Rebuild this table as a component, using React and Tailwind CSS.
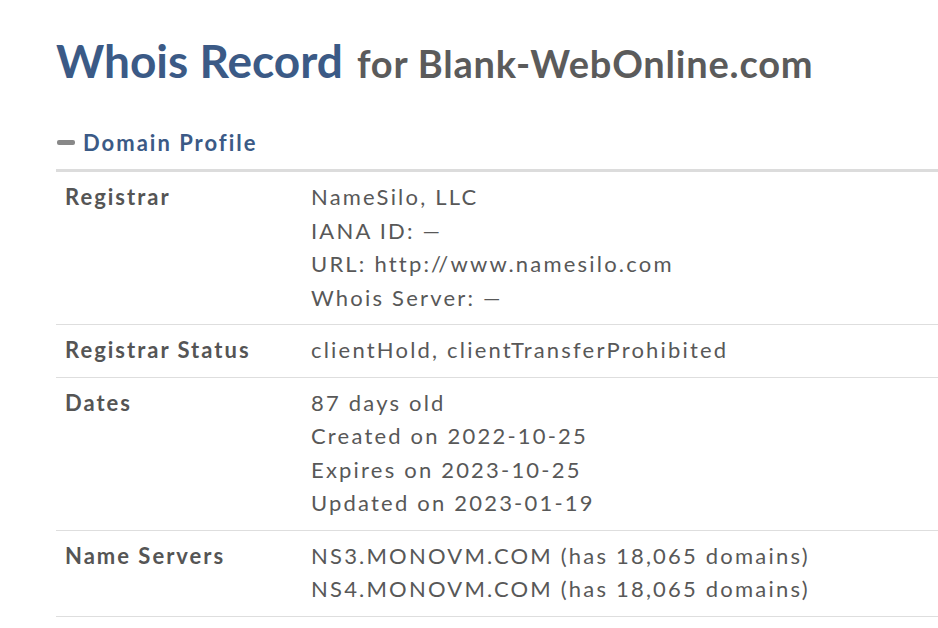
import React from "react";

const rows = [
  {
    label: "Registrar",
    values: [
      "NameSilo, LLC",
      "IANA ID: —",
      "URL: http://www.namesilo.com",
      "Whois Server: —",
    ],
  },
  {
    label: "Registrar Status",
    values: ["clientHold, clientTransferProhibited"],
  },
  {
    label: "Dates",
    values: [
      "87 days old",
      "Created on 2022-10-25",
      "Expires on 2023-10-25",
      "Updated on 2023-01-19",
    ],
  },
  {
    label: "Name Servers",
    values: [
      "NS3.MONOVM.COM (has 18,065 domains)",
      "NS4.MONOVM.COM (has 18,065 domains)",
    ],
  },
];

export default function App() {
  return (
    <div
      className="min-h-[628px] bg-white pl-[56px] pt-[38px]"
      style={{ fontFamily: "Lato, 'Open Sans', sans-serif" }}
    >
      <h1 className="flex items-baseline gap-[14px] leading-none">
        <span className="text-[46px] font-bold text-[#3b5a86]">Whois Record</span>
        <span className="text-[38px] font-bold tracking-[0.8px] text-[#5b5b5b]">
          for Blank-WebOnline.com
        </span>
      </h1>

      <div className="mt-[42px] flex items-center gap-[8px] pl-[1px]">
        <span className="inline-block h-[5px] w-[18px] rounded-[2px] bg-[#888]" />
        <span className="text-[22px] font-bold tracking-[2px] text-[#3b5a86]">Domain Profile</span>
      </div>

      <div className="mt-[10px] border-t-[3px] border-[#dcdcdc]">
        {rows.map((row) => (
          <div
            key={row.label}
            className="flex border-b border-[#dedede] pb-[10px] pt-[8px] text-[22px] leading-[33.5px]"
          >
            <div className="w-[255px] shrink-0 pl-[9px] font-bold tracking-[2px] text-[#555]">
              {row.label}
            </div>
            <div className="tracking-[2.2px] text-[#585858]">
              {row.values.map((v) => (
                <div key={v}>{v}</div>
              ))}
            </div>
          </div>
        ))}
      </div>
    </div>
  );
}
